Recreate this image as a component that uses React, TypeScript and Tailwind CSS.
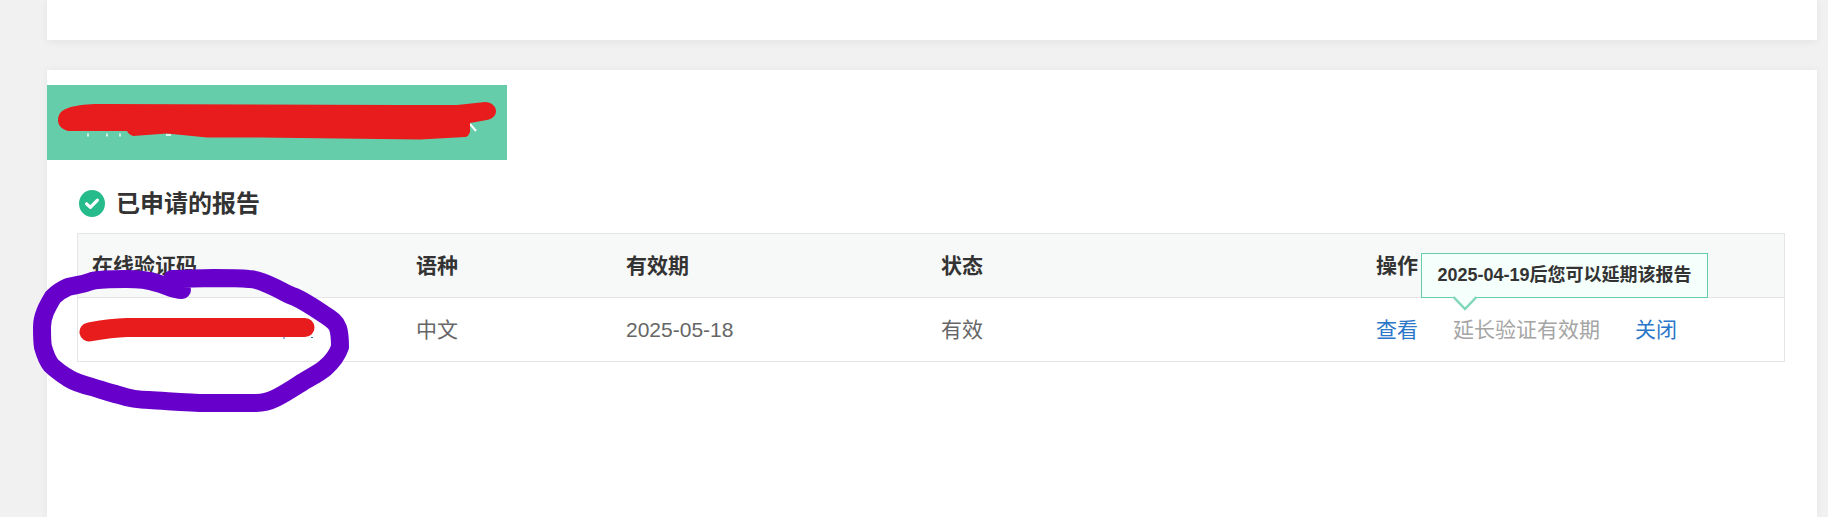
const FONT = "font-['Liberation_Sans','Noto_Sans_CJK_SC',sans-serif]";

function CheckBadge() {
  return (
    <svg width="26" height="27" viewBox="0 0 26 27" className="shrink-0">
      <ellipse cx="13" cy="13.5" rx="13" ry="13.5" fill="#25bb8a" />
      <path d="M7.6 13.8 L11.4 17.4 L18.4 10.2" fill="none" stroke="#fff" strokeWidth="3.2" strokeLinecap="round" strokeLinejoin="round" />
    </svg>
  );
}

function Scribbles() {
  return (
    <svg width="1828" height="517" viewBox="0 0 1828 517" className="absolute left-0 top-0 pointer-events-none">
      <path d="M88 133.5 v3 M107 133.5 v3 M120 133.5 v3 M166 135 h5" stroke="#fff" strokeWidth="1.4" fill="none" />
      <path d="M470 124 L476 131" stroke="#fff" strokeWidth="2" fill="none" />
      <path
        d="M58 120 C58 112 64 108 76 106 C86 104 96 104 103 104 L400 105 L457 105 L485 102 C491 102 496 106 496 111 C496 116 492 119 487 120 L470 123 L470 132 C469 135 467 137 465 137 L420 139.5 L340 138.5 L260 137.5 L207 137.5 L167 133.5 L133 136 C130 135 128 133 127 131 L68 131 C62 129 58 126 58 120 Z"
        fill="#e81c1c"
      />
      <path d="M283 338 h2 M311 337.5 h2" stroke="#2a76c8" strokeWidth="1.2" fill="none" />
      <path d="M89 332 C100 330 110 328 127 327.5 L305 327.5" stroke="#e81c1c" strokeWidth="19" strokeLinecap="round" fill="none" />
      <path
        d="M182 290 C172 290 166 285 157 283 C146 279 136 279 126 279 C112 279 100 279 92 281 C82 285 76 285 68 287 C61 290 57 293 53 297 C47 307 42 316 42 327 C42 335 42 342 43 347 C45 354 47 360 51 365 C57 371 62 374 68 378 C76 383 84 385 92 387 C102 390 110 393 119 395 C128 398 138 400 149 400 C168 401 188 403 207 403 L256 403 C264 403 270 401 276 398 C288 392 296 386 306 380 C313 376 319 373 325 368 C332 362 337 356 340 347 C340 340 340 334 338 328 C336 322 331 319 325 315 C316 309 306 302 295 297 C288 295 282 291 276 288 C268 284 258 279 249 279 C238 278 226 278 214 278 L172 279"
        fill="none"
        stroke="#6800cc"
        strokeWidth="18"
        strokeLinecap="round"
        strokeLinejoin="round"
      />
    </svg>
  );
}

const cols = "grid grid-cols-[324px_210px_315px_435px_1fr]";

export default function App() {
  return (
    <div className={`${FONT} relative h-[517px] w-[1828px] overflow-hidden bg-[#f1f1f1] pl-[47px] pr-[11px]`}>
      <div className="h-10 bg-white shadow-[0_2px_8px_rgba(0,0,0,0.06)]" />
      <div className="mt-[30px] h-[447px] bg-white pt-[15px] shadow-[0_0_8px_rgba(0,0,0,0.05)]">
        <div className="h-[75px] w-[460px] bg-[#66cdaa]" />
        <div className="mt-[30px] flex h-[27px] items-center gap-[11px] pl-8">
          <CheckBadge />
          <h2 className="text-[24px] font-bold leading-[27px] text-[#333]">已申请的报告</h2>
        </div>
        <div className="relative ml-[30px] mt-4 w-[1708px] border border-[#e5e5e5] text-[21px]">
          <div className={`${cols} h-[64px] items-center border-b border-[#e5e5e5] bg-[#f7f9f8] font-bold text-[#333]`}>
            <div className="pl-[14px]">在线验证码</div>
            <div className="pl-[14px]">语种</div>
            <div className="pl-[14px]">有效期</div>
            <div className="pl-[14px]">状态</div>
            <div className="pl-[14px]">操作</div>
          </div>
          <div className={`${cols} h-[63px] items-center text-[#666]`}>
            <div className="pl-[14px]" />
            <div className="pl-[14px]">中文</div>
            <div className="pl-[14px]">2025-05-18</div>
            <div className="pl-[14px]">有效</div>
            <div className="flex gap-[35px] pl-[14px]">
              <span className="text-[#2a76c8]">查看</span>
              <span className="text-[#a5a5a5]">延长验证有效期</span>
              <span className="text-[#2a76c8]">关闭</span>
            </div>
          </div>
          <div className="absolute left-[1343px] top-[19px] flex h-[45px] w-[287px] items-center justify-center border border-[#66cdaa] bg-[#f5fffb] text-[18px] font-bold text-[#333]">
            2025-04-19后您可以延期该报告
            <svg width="26" height="15" viewBox="0 0 26 15" className="absolute left-[30px] top-[42px]">
              <path d="M1.5 1 L13 13 L24.5 1" fill="#f5fffb" stroke="#7fd6b8" strokeWidth="2.5" />
            </svg>
          </div>
        </div>
      </div>
      <Scribbles />
    </div>
  );
}
